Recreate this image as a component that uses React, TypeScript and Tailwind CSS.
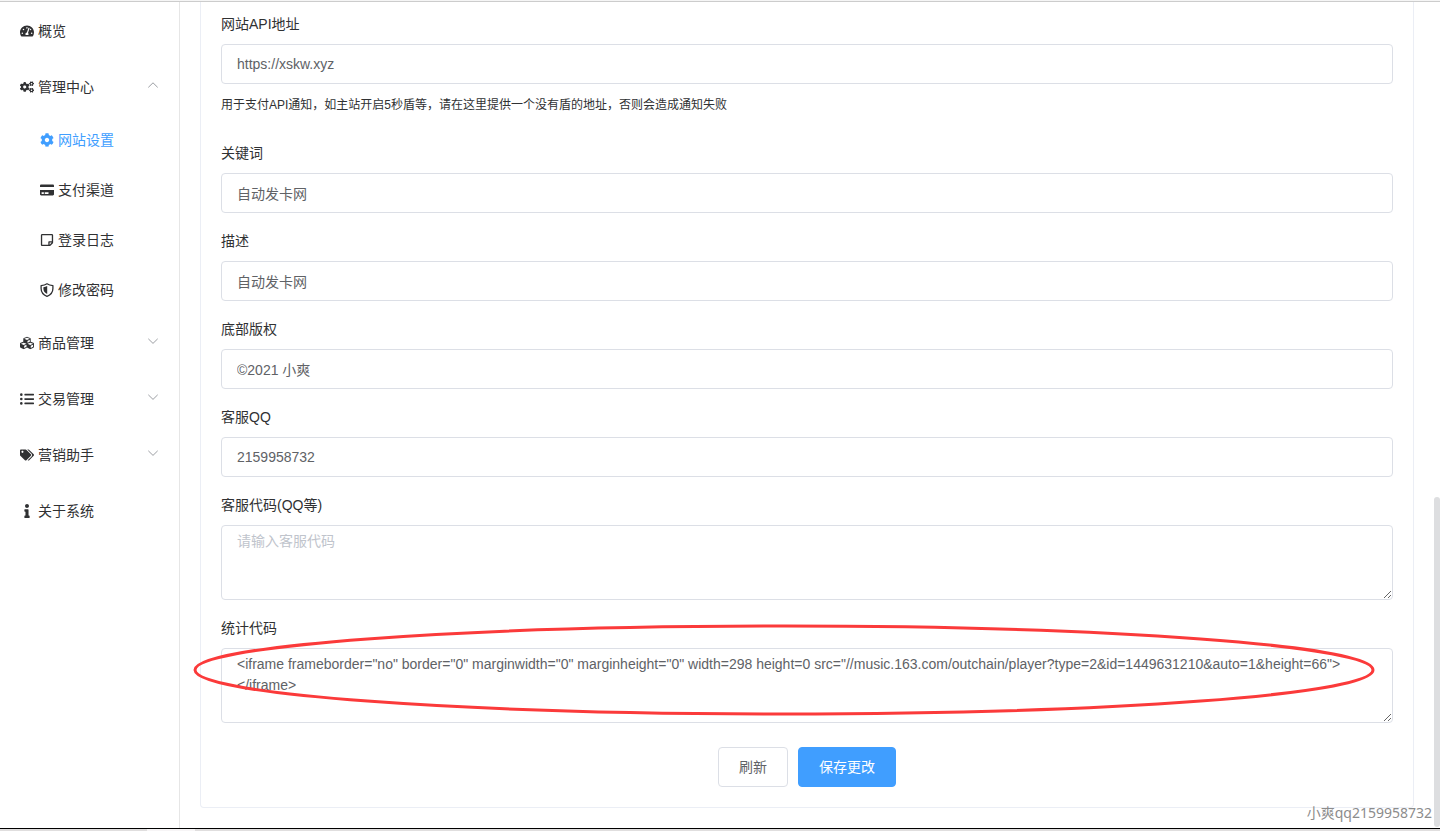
import React, { useState } from "react";
import {
  FaCog,
  FaCogs,
  FaCreditCard,
  FaCubes,
  FaInfo,
  FaListUl,
  FaRegStickyNote,
  FaTachometerAlt,
  FaTags
} from "react-icons/fa";

const ShieldIcon: React.FC = () => (
  <svg viewBox="0 0 14 14" className="w-3.5 h-3.5" fill="none">
    <path
      d="M7 0.8 C8.6 1.8 10.6 2.4 12.9 2.6 V5.6 C12.9 9.2 10.6 12 7 13.3 C3.4 12 1.1 9.2 1.1 5.6 V2.6 C3.4 2.4 5.4 1.8 7 0.8 Z"
      stroke="currentColor"
      strokeWidth="1.3"
      strokeLinejoin="round"
    />
    <path
      d="M7.2 3 C6 3.7 4.7 4 3.4 4.2 V5.8 C3.4 8.2 4.9 10 7.2 11 Z"
      fill="currentColor"
    />
  </svg>
);

const Chevron: React.FC<{ open?: boolean }> = ({ open }) => (
  <svg viewBox="0 0 12 12" className="w-3 h-3 mb-1" fill="none">
    <path
      d={open ? "M1.3 8.4 L6 3.8 L10.7 8.4" : "M1.3 3.8 L6 8.4 L10.7 3.8"}
      stroke="#909399"
      strokeWidth="0.9"
    />
  </svg>
);

const menu = [
  { name: "概览", icon: <FaTachometerAlt /> },
  {
    name: "管理中心",
    icon: <FaCogs />,
    children: [
      { name: "网站设置", icon: <FaCog /> },
      { name: "支付渠道", icon: <FaCreditCard /> },
      { name: "登录日志", icon: <FaRegStickyNote /> },
      { name: "修改密码", icon: <ShieldIcon /> }
    ]
  },
  { name: "商品管理", icon: <FaCubes />, children: [] },
  { name: "交易管理", icon: <FaListUl />, children: [] },
  { name: "营销助手", icon: <FaTags />, children: [] },
  { name: "关于系统", icon: <FaInfo /> }
];

const SideBar: React.FC = () => {
  const [active, setActive] = useState("网站设置");
  const [opened, setOpened] = useState("管理中心");
  return (
    <nav className="w-[180px] shrink-0 border-r border-[#e6e6e6] pt-px text-[#303133]">
      <ul>
        {menu.map((item) => (
          <li key={item.name}>
            {item.children ? (
              <button
                type="button"
                className="w-full h-14 px-5 flex items-center gap-1 cursor-pointer"
                onClick={() => setOpened(opened === item.name ? "" : item.name)}
              >
                {item.icon}
                <span className="flex-1 text-left">{item.name}</span>
                <Chevron open={opened === item.name} />
              </button>
            ) : (
              <a href="#" className="h-14 px-5 flex items-center gap-1">
                {item.icon}
                <span>{item.name}</span>
              </a>
            )}
            {item.children && opened === item.name ? (
              <ul>
                {item.children.map((child) => (
                  <li key={child.name}>
                    <a
                      href="#"
                      className={`h-[50px] pl-10 flex items-center gap-1 ${
                        active === child.name ? "text-[#409eff]" : ""
                      }`}
                      onClick={() => setActive(child.name)}
                    >
                      {child.icon}
                      <span>{child.name}</span>
                    </a>
                  </li>
                ))}
              </ul>
            ) : null}
          </li>
        ))}
      </ul>
    </nav>
  );
};

interface FieldProps {
  id: string;
  label: string;
  value?: string;
  placeholder?: string;
  hint?: string;
  area?: boolean;
  marked?: boolean;
}

const Field: React.FC<FieldProps> = ({
  id,
  label,
  value,
  placeholder,
  hint,
  area,
  marked
}) => {
  return (
    <div>
      <label htmlFor={id} className="block leading-10">
        {label}
      </label>
      <div className="relative">
        {area ? (
          <textarea
            id={id}
            rows={3}
            defaultValue={value}
            placeholder={placeholder}
            className="block w-full min-h-[75px] px-[15px] py-[5px] leading-[21px] border border-[#dcdfe6] rounded bg-white text-[#606266] placeholder:text-[#c0c4cc] outline-none resize-y"
          />
        ) : (
          <input
            id={id}
            type="text"
            defaultValue={value}
            className="block w-full h-10 px-[15px] border border-[#dcdfe6] rounded bg-white text-[#606266] outline-none"
          />
        )}
        {marked ? (
          <div className="absolute -left-[26px] right-5 -top-[22px] bottom-[9px] pointer-events-none">
            <svg className="block w-full h-full overflow-visible" fill="none">
              <ellipse
                cx="50%"
                cy="50%"
                rx="50%"
                ry="50%"
                stroke="#fb3a3a"
                strokeWidth="3"
              />
            </svg>
          </div>
        ) : null}
      </div>
      {hint ? <p className="mt-[11px] mb-2.5 text-xs leading-5">{hint}</p> : null}
    </div>
  );
};

const SettingsForm: React.FC = () => {
  return (
    <form
      className="border border-t-0 border-[#ebeef5] rounded-b px-5 pt-0.5 pb-5 text-[#303133]"
      onSubmit={(e) => e.preventDefault()}
    >
      <div className="flex flex-col gap-2">
        <Field
          id="api"
          label="网站API地址"
          value="https://xskw.xyz"
          hint="用于支付API通知，如主站开启5秒盾等，请在这里提供一个没有盾的地址，否则会造成通知失败"
        />
        <Field id="keywords" label="关键词" value="自动发卡网" />
        <Field id="description" label="描述" value="自动发卡网" />
        <Field id="copyright" label="底部版权" value="©2021 小爽" />
        <Field id="qq" label="客服QQ" value="2159958732" />
        <Field
          id="service"
          label="客服代码(QQ等)"
          placeholder="请输入客服代码"
          area
        />
        <Field
          id="statistics"
          label="统计代码"
          value={
            '<iframe frameborder="no" border="0" marginwidth="0" marginheight="0" width=298 height=0 src="//music.163.com/outchain/player?type=2&id=1449631210&auto=1&height=66">\n</iframe>'
          }
          area
          marked
        />
      </div>
      <div className="mt-6 flex justify-center gap-2.5">
        <button
          type="button"
          className="h-10 px-5 border border-[#dcdfe6] rounded bg-white text-[#606266] cursor-pointer"
        >
          刷新
        </button>
        <button
          type="submit"
          className="h-10 px-5 border border-[#409eff] rounded bg-[#409eff] text-white cursor-pointer"
        >
          保存更改
        </button>
      </div>
    </form>
  );
};

const App: React.FC = () => {
  return (
    <div className="relative min-h-screen flex flex-col bg-white text-sm font-['Liberation_Sans','Noto_Sans_CJK_SC',sans-serif]">
      <div className="h-0.5 bg-[#f5f5f5] border-b border-[#cccccc]" />
      <div className="flex-1 flex">
        <SideBar />
        <main className="flex-1 min-w-0 px-5 pb-5">
          <SettingsForm />
        </main>
        <div className="w-1.5 flex flex-col justify-end pb-px">
          <div className="h-[330px] rounded-full bg-[#dddee0]" />
        </div>
      </div>
      <div className="h-[3px] flex border-t border-black bg-[#e0dede]">
        <div className="w-[147px]" />
        <div className="w-12 bg-[#f7f5f6]" />
      </div>
      <div className="absolute right-2 bottom-2 text-[#8c8c8c] font-['Noto_Sans','Noto_Sans_CJK_SC',sans-serif]">
        小爽qq2159958732
      </div>
    </div>
  );
};

export default App;
